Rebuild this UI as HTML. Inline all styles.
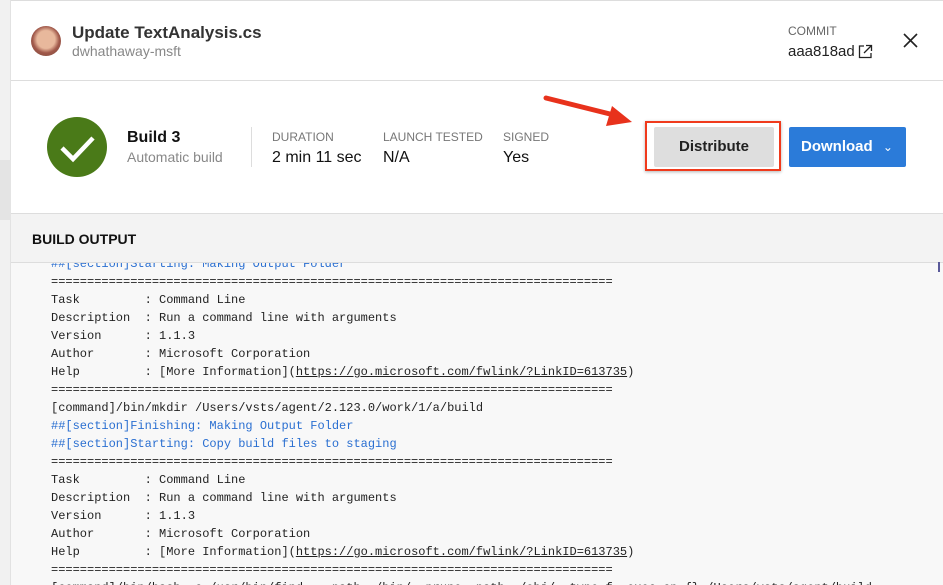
<!DOCTYPE html>
<html><head><meta charset="utf-8"><style>
*{margin:0;padding:0;box-sizing:border-box}
body{width:943px;height:585px;overflow:hidden;background:#fff;font-family:"Liberation Sans",sans-serif;position:relative}
.abs{position:absolute}
.log{position:absolute;left:51px;top:255px;font-family:"Liberation Mono",monospace;font-size:12px;line-height:18px;color:#222;white-space:pre}
.b{color:#2a6fd1}
u{text-decoration:underline}
</style></head><body>
<div class="abs" style="left:0;top:0;width:11px;height:585px;background:#f1f1f1;border-right:1px solid #e2e2e2"></div>
<div class="abs" style="left:0;top:160px;width:11px;height:60px;background:#e4e4e4"></div>
<div class="abs" style="left:11px;top:0;width:932px;height:1px;background:#ddd"></div>
<!-- header -->
<div class="abs" style="left:31px;top:26px;width:30px;height:30px;border-radius:50%;background:radial-gradient(circle at 50% 45%,#e8b89c 0 40%,#a0584a 60%,#7a4a3c)"></div>
<div class="abs" style="left:72px;top:23px;font-size:17px;font-weight:bold;color:#333">Update TextAnalysis.cs</div>
<div class="abs" style="left:72px;top:43px;font-size:14px;color:#888">dwhathaway-msft</div>
<div class="abs" style="left:788px;top:24px;font-size:12px;color:#666">COMMIT</div>
<div class="abs" style="left:788px;top:43px;font-size:15px;color:#222">aaa818ad</div>
<svg class="abs" style="left:858px;top:44px" width="15" height="15" viewBox="0 0 15 15"><path d="M6 2H1.5v11.5H13V9M8 1.5h5.5V7M13.5 1.5L6 9" fill="none" stroke="#222" stroke-width="1.3"/></svg>
<svg class="abs" style="left:903px;top:33px" width="15" height="15"><path d="M1 1L14 14M14 1L1 14" stroke="#222" stroke-width="1.6"/></svg>
<div class="abs" style="left:11px;top:80px;width:932px;height:1px;background:#ddd"></div>
<!-- stats -->
<div class="abs" style="left:47px;top:117px;width:60px;height:60px;border-radius:50%;background:#4a7a18"></div>
<svg class="abs" style="left:47px;top:117px" width="60" height="60"><path d="M15 31L26 42L46 21" fill="none" stroke="#fff" stroke-width="4.5"/></svg>
<div class="abs" style="left:127px;top:129px;font-size:16px;font-weight:bold;color:#111">Build 3</div>
<div class="abs" style="left:127px;top:149px;font-size:14px;color:#888">Automatic build</div>
<div class="abs" style="left:251px;top:127px;width:1px;height:40px;background:#ddd"></div>
<div class="abs" style="left:272px;top:130px;font-size:12px;color:#777">DURATION</div>
<div class="abs" style="left:272px;top:149px;font-size:16px;color:#111">2 min 11 sec</div>
<div class="abs" style="left:383px;top:130px;font-size:12px;color:#777">LAUNCH TESTED</div>
<div class="abs" style="left:383px;top:149px;font-size:16px;color:#111">N/A</div>
<div class="abs" style="left:503px;top:130px;font-size:12px;color:#777">SIGNED</div>
<div class="abs" style="left:503px;top:149px;font-size:16px;color:#111">Yes</div>
<svg class="abs" style="left:540px;top:90px" width="100" height="40"><path d="M6 8L78 26" stroke="#e8321c" stroke-width="5" stroke-linecap="round"/><path d="M72 16L92 32L66 36Z" fill="#e8321c"/></svg>
<div class="abs" style="left:645px;top:121px;width:136px;height:50px;border:2px solid #f03a1c;box-shadow:0 1px 3px rgba(0,0,0,.3)"></div>
<div class="abs" style="left:654px;top:127px;width:120px;height:40px;background:#dedede;border-radius:2px;font-size:15px;font-weight:bold;color:#222;text-align:center;line-height:40px">Distribute</div>
<div class="abs" style="left:789px;top:127px;width:117px;height:40px;background:#2b7bd9;border-radius:2px;font-size:15px;font-weight:bold;color:#fff;line-height:40px;padding-left:12px">Download <span style="font-weight:normal;font-size:12px;margin-left:6px">&#8964;</span></div>
<div class="abs" style="left:11px;top:213px;width:932px;height:1px;background:#ddd"></div>
<div class="abs" style="left:11px;top:214px;width:932px;height:48px;background:#f3f3f3"></div>
<div class="abs" style="left:32px;top:231px;font-size:14px;font-weight:bold;color:#111">BUILD OUTPUT</div>
<div class="abs" style="left:11px;top:262px;width:932px;height:1px;background:#ddd"></div>
<div class="abs" style="left:11px;top:263px;width:932px;height:322px;background:#f8f8f8;overflow:hidden">
<div class="log" style="left:40px;top:-8px"><span class="b">##[section]Starting: Making Output Folder</span>
==============================================================================
Task         : Command Line
Description  : Run a command line with arguments
Version      : 1.1.3
Author       : Microsoft Corporation
Help         : [More Information](<u>https://go.microsoft.com/fwlink/?LinkID=613735</u>)
==============================================================================
[command]/bin/mkdir /Users/vsts/agent/2.123.0/work/1/a/build
<span class="b">##[section]Finishing: Making Output Folder</span>
<span class="b">##[section]Starting: Copy build files to staging</span>
==============================================================================
Task         : Command Line
Description  : Run a command line with arguments
Version      : 1.1.3
Author       : Microsoft Corporation
Help         : [More Information](<u>https://go.microsoft.com/fwlink/?LinkID=613735</u>)
==============================================================================
[command]/bin/bash -c /usr/bin/find . -path ./bin/ -prune -path ./obj/ -type f -exec cp {} /Users/vsts/agent/build</div>
</div>
<div class="abs" style="left:938px;top:262px;width:2px;height:10px;background:#5a5a9a"></div>
</body></html>
